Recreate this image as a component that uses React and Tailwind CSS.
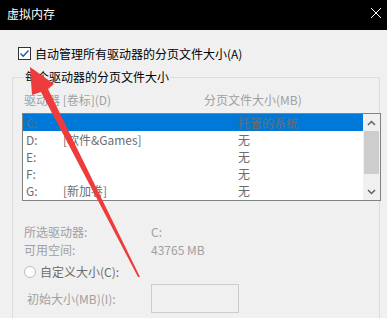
import React from 'react';

const rows = [
    { drive: 'C:', label: '', size: '托管的系统', selected: true },
    { drive: 'D:', label: '[软件&Games]', size: '无' },
    { drive: 'E:', label: '', size: '无' },
    { drive: 'F:', label: '', size: '无' },
    { drive: 'G:', label: '[新加卷]', size: '无' },
];

const font = { fontFamily: '"Noto Sans CJK SC", "Noto Sans", sans-serif' };

const App = () => {
    return (
        <div className="relative w-[387px] h-[318px] overflow-hidden bg-[#f0f0f0] text-[12px] leading-none text-black" style={font}>
            {/* title bar */}
            <div className="h-[30px] bg-black flex items-center justify-between pl-[7px] pr-[5px]">
                <span className="text-white text-[12px] -mt-[3px]">虚拟内存</span>
                <svg width="12" height="12" viewBox="0 0 12 12" className="-mt-[4px]">
                    <path d="M1 1 L11 11 M11 1 L1 11" stroke="#fff" strokeWidth="1" />
                </svg>
            </div>

            {/* auto manage */}
            <div className="flex items-center mt-[17px] pl-[18px] h-[13px]">
                <div className="w-[13px] h-[13px] border border-[#333] bg-white flex items-center justify-center">
                    <svg width="11" height="11" viewBox="0 0 11 11">
                        <path d="M1.5 5.5 L4.2 8.2 L9.5 2.5" stroke="#1b5aa8" strokeWidth="1.4" fill="none" />
                    </svg>
                </div>
                <span className="ml-[4px]">自动管理所有驱动器的分页文件大小(A)</span>
            </div>

            {/* group box */}
            <div className="relative mt-[17px] ml-[12px] w-[368px] h-[260px] border border-[#dcdcdc]">
                <span className="absolute -top-[7px] left-[11px] px-[1px] bg-[#f0f0f0]">每个驱动器的分页文件大小</span>

                <div className="flex mt-[16px] ml-[11px] text-[#a0a0a0]">
                    <span className="w-[180px]">驱动器 [卷标](D)</span>
                    <span>分页文件大小(MB)</span>
                </div>

                <div className="flex mt-[7px] ml-[9px] w-[359px] h-[88px] border border-[#828282] bg-white">
                    <div className="flex-1 flex flex-col">
                        {rows.map(r => (
                            <div
                                key={r.drive}
                                className={`flex items-center h-[17px] pl-[3px] text-[#6d6d6d] ${r.selected ? 'bg-[#0078d7]' : ''}`}
                            >
                                <span className="w-[37px]">{r.drive}</span>
                                <span className="w-[175px]">{r.label}</span>
                                <span>{r.size}</span>
                            </div>
                        ))}
                    </div>
                    <div className="w-[17px] flex flex-col bg-[#f0f0f0]">
                        <div className="h-[17px] flex items-center justify-center">
                            <svg width="9" height="6" viewBox="0 0 9 6">
                                <path d="M1 5 L4.5 1.5 L8 5" stroke="#606060" strokeWidth="1.5" fill="none" />
                            </svg>
                        </div>
                        <div className="h-[43px] mx-[1px] bg-[#cdcdcd]" />
                        <div className="flex-1" />
                        <div className="h-[17px] flex items-center justify-center">
                            <svg width="9" height="6" viewBox="0 0 9 6">
                                <path d="M1 1 L4.5 4.5 L8 1" stroke="#606060" strokeWidth="1.5" fill="none" />
                            </svg>
                        </div>
                    </div>
                </div>

                <div className="mt-[25px] ml-[11px] text-[#a0a0a0] flex flex-col gap-[6px]">
                    <div className="flex h-[12px] items-center">
                        <span className="w-[127px]">所选驱动器:</span>
                        <span>C:</span>
                    </div>
                    <div className="flex h-[12px] items-center">
                        <span className="w-[127px]">可用空间:</span>
                        <span>43765 MB</span>
                    </div>
                </div>

                <div className="flex items-center mt-[10px] ml-[11px] h-[12px]">
                    <div className="w-[12px] h-[12px] rounded-full border border-[#bcbcbc] bg-white" />
                    <span className="ml-[4px] text-[#6d6d6d]">自定义大小(C):</span>
                </div>

                <div className="flex items-center mt-[6px] ml-[14px]">
                    <span className="w-[124px] text-[#a0a0a0]">初始大小(MB)(I):</span>
                    <div className="w-[88px] h-[29px] border border-[#cccccc] bg-[#f0f0f0]" />
                </div>
            </div>

            {/* red annotation arrow */}
            <svg className="absolute left-0 top-0 pointer-events-none" width="387" height="318" viewBox="0 0 387 318">
                <polygon
                    points="30,67 54,84 48,89 140,277 138,277 41,92 32,95"
                    fill="#ee3b3b"
                />
            </svg>
        </div>
    );
};

export default App;
